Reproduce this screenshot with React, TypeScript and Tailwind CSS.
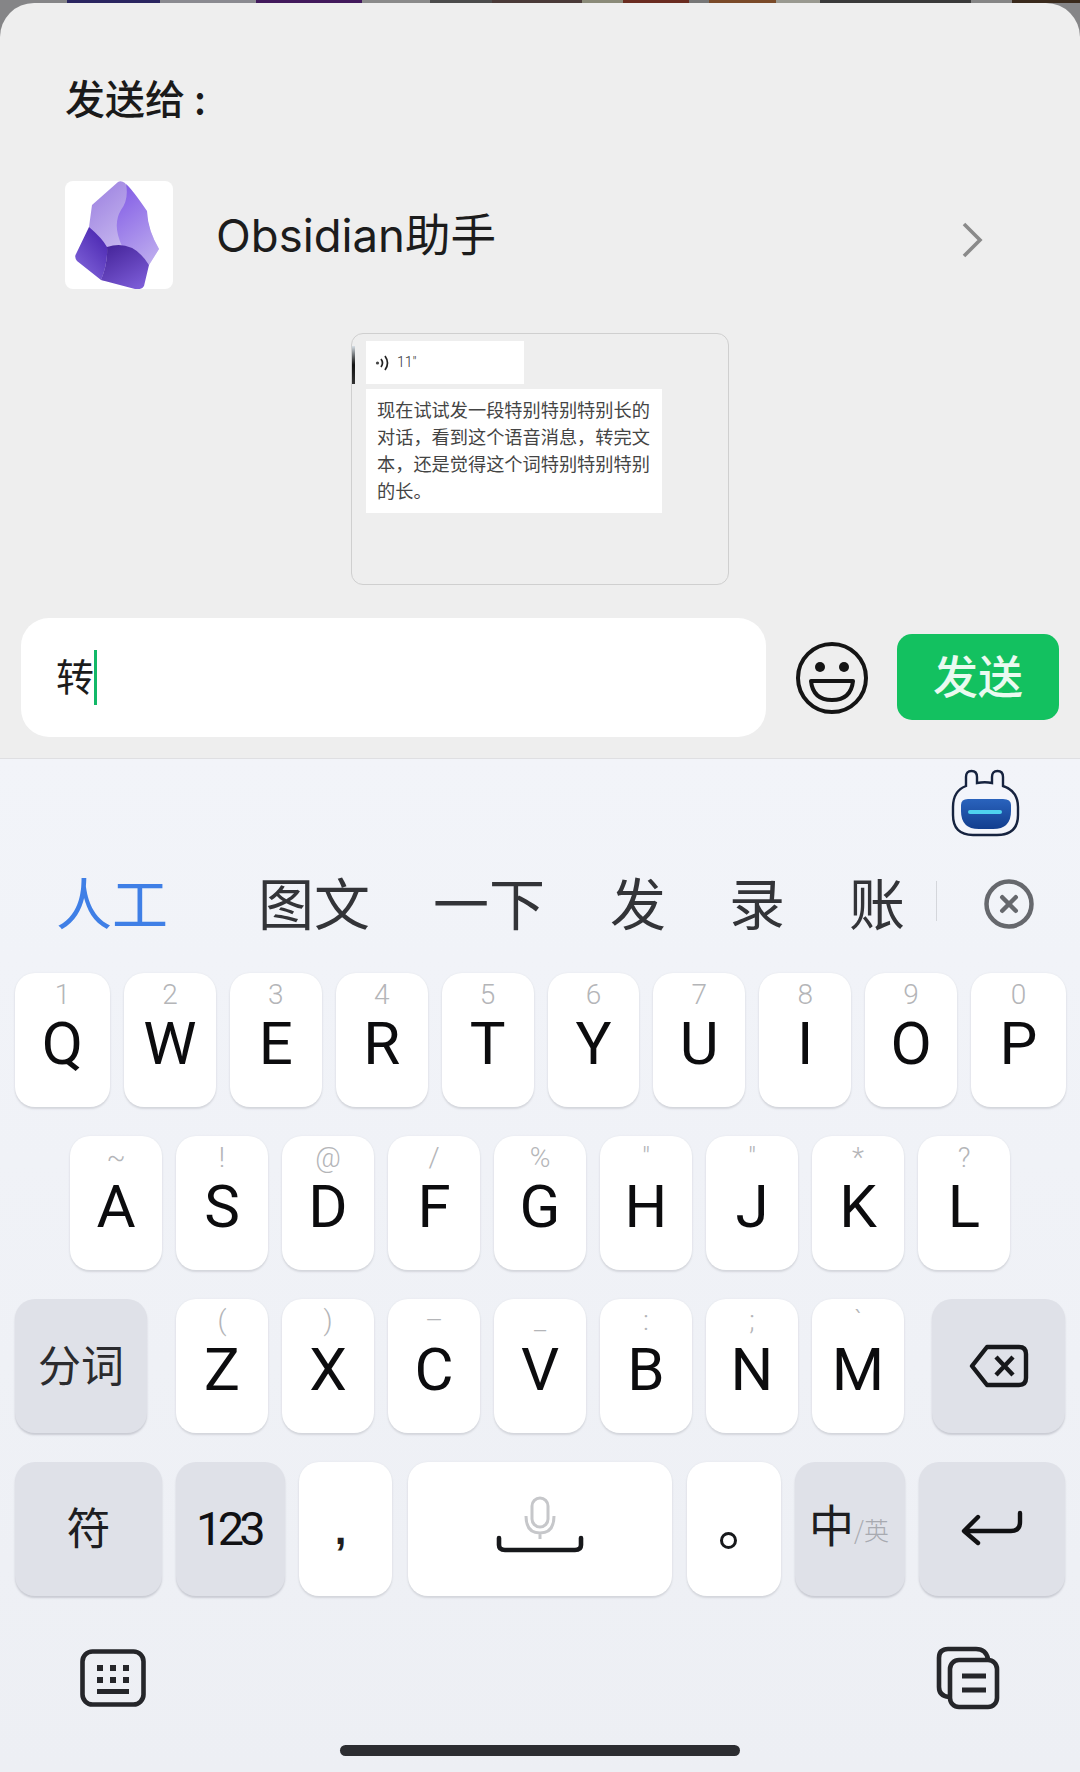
import { CircleX } from "lucide-react";

const row1 = [
  ["Q", "1"], ["W", "2"], ["E", "3"], ["R", "4"], ["T", "5"],
  ["Y", "6"], ["U", "7"], ["I", "8"], ["O", "9"], ["P", "0"],
];
const row2 = [
  ["A", "~"], ["S", "!"], ["D", "@"], ["F", "/"], ["G", "%"],
  ["H", '"'], ["J", '"'], ["K", "*"], ["L", "?"],
];
const row3 = [
  ["Z", "("], ["X", ")"], ["C", "–"], ["V", "_"], ["B", ":"], ["N", ";"], ["M", "`"],
];
const candidates = [
  { text: "人工", w: "w-[202px]", color: "text-[#3f7fe6]" },
  { text: "图文", w: "w-[175px]", color: "text-[#333438]" },
  { text: "一下", w: "w-[177px]", color: "text-[#333438]" },
  { text: "发", w: "w-[119px]", color: "text-[#333438]" },
  { text: "录", w: "w-[120px]", color: "text-[#333438]" },
  { text: "账", w: "w-[87px]", color: "text-[#333438]" },
];

const cjk = "font-['Noto_Sans_CJK_SC',sans-serif]";
const whiteKey = "bg-white rounded-[20px] shadow-[0_2px_2px_#d4d6dc,0_0_2px_#e2e4ea]";
const greyKey = "bg-[#dfe1e8] rounded-[20px] shadow-[0_2px_2px_#c9cbd3]";

function LetterKey({ letter, hint }: { letter: string; hint: string }) {
  return (
    <div className={`${whiteKey} h-[134px] flex flex-col items-center`}>
      <span className="h-[44px] pt-[4px] text-[28px] leading-[36px] text-[#b4b5b8] font-['Roboto',sans-serif] font-light">{hint}</span>
      <span className="text-[60px] leading-[54px] text-[#0c0c0e] font-['Roboto',sans-serif]">{letter}</span>
    </div>
  );
}

function ObsidianLogo() {
  return (
    <svg width="108" height="108" viewBox="0 0 108 108">
      <defs>
        <linearGradient id="ob1" x1="0.2" y1="0.1" x2="0.7" y2="0.9">
          <stop offset="0" stopColor="#a48be3" />
          <stop offset="1" stopColor="#d8cdf5" />
        </linearGradient>
        <linearGradient id="ob2" x1="0.3" y1="0" x2="0.7" y2="1">
          <stop offset="0" stopColor="#8560e6" />
          <stop offset="1" stopColor="#bcaaee" />
        </linearGradient>
        <linearGradient id="ob3" x1="0.2" y1="0" x2="0.8" y2="1">
          <stop offset="0" stopColor="#47269c" />
          <stop offset="1" stopColor="#7d5dd8" />
        </linearGradient>
        <linearGradient id="ob4" x1="0.7" y1="0.1" x2="0.1" y2="1">
          <stop offset="0" stopColor="#4f2cb4" />
          <stop offset="1" stopColor="#8468dc" />
        </linearGradient>
      </defs>
      <path d="M53 1 Q56 -1 60 2 L82 36 Q84 50 94 68 L84 84 L40 100 L36 99 L24 46 L27 24Z" fill="url(#ob1)" />
      <path d="M61 3 Q67 8 82 30 Q83 50 94 68 L84 84 Q76 70 57 65 Q47 44 56 29 Q64 18 61 3Z" fill="url(#ob2)" />
      <path d="M24 46 Q37 57 42 66 Q43 82 36 99 L12 80 Q9 76 11 73Z" fill="url(#ob4)" />
      <path d="M42 66 Q68 58 84 84 L79 105 Q77 109 70 108 L36 99 Q43 82 42 66Z" fill="url(#ob3)" />
    </svg>
  );
}

function Robot() {
  return (
    <svg width="70" height="68" viewBox="0 0 70 68">
      <defs>
        <linearGradient id="visor" x1="0" y1="0" x2="0" y2="1">
          <stop offset="0" stopColor="#2a63bd" />
          <stop offset="1" stopColor="#123e8e" />
        </linearGradient>
      </defs>
      <path d="M15 17 V8 Q15 2 20.5 2 Q26 2 26 8 V14 Q34 12.5 41 14 V8 Q41 2 46.5 2 Q52 2 52 8 V17 Q67 22 67 38 V46 Q67 66 46 66 H22 Q2 66 2 46 V38 Q2 22 15 17Z" fill="#f3f5fb" stroke="#16233f" strokeWidth="2.4" />
      <path d="M10 36 Q10 30 17 30 H52 Q60 30 60 36 V42 Q60 60 42 60 H28 Q10 60 10 42Z" fill="url(#visor)" />
      <rect x="17" y="41" width="34" height="4" rx="2" fill="#4fd2ee" />
    </svg>
  );
}

export default function App() {
  return (
    <div className="relative w-[1080px] h-[1772px] bg-[#858587] overflow-hidden flex flex-col font-['Inter',sans-serif]">
      {/* bit of the chat behind the sheet */}
      <div className="h-[3px] flex">
        <div className="w-[67px] bg-[#858587]" />
        <div className="w-[93px] bg-[#2a2560]" />
        <div className="w-[96px] bg-[#8a8a90]" />
        <div className="w-[106px] bg-[#42195c]" />
        <div className="w-[68px] bg-[#8a8a8a]" />
        <div className="w-[62px] bg-[#4c4c4c]" />
        <div className="w-[90px] bg-[#4a3a38]" />
        <div className="w-[41px] bg-[#8a8a78]" />
        <div className="w-[66px] bg-[#6a2c20]" />
        <div className="w-[20px] bg-[#777777]" />
        <div className="w-[67px] bg-[#7a4a28]" />
        <div className="w-[44px] bg-[#999990]" />
        <div className="w-[151px] bg-[#3a3a3a]" />
        <div className="w-[41px] bg-[#858585]" />
        <div className="flex-1 bg-[#3a2a1c]" />
      </div>

      <section className="h-[755px] bg-[#eeeeee] rounded-t-[34px] flex flex-col">
        <h1 className={`${cjk} ml-[65px] mt-[70px] h-[48px] text-[40px] leading-[48px] font-medium text-[#1a1a1a]`}>发送给 :</h1>

        <div className="mt-[60px] ml-[65px] h-[108px] flex items-center">
          <div className="w-[108px] h-[108px] bg-white rounded-[8px] overflow-hidden">
            <ObsidianLogo />
          </div>
          <div className="ml-[43px] mt-[2px] text-[45.5px] leading-[56px] text-[#1c1c1c] font-['Inter','Noto_Sans_CJK_SC',sans-serif]">Obsidian助手</div>
          <svg className="ml-auto mr-[96px] mt-[10px]" width="24" height="38" viewBox="0 0 24 38">
            <path d="M4 3 L20 19 L4 35" fill="none" stroke="#8a8a8a" strokeWidth="3.6" />
          </svg>
        </div>

        {/* quoted image */}
        <div className="relative mt-[44px] ml-[351px] w-[378px] h-[252px] border border-[#cfcfcf] rounded-[12px] pt-[7px] pl-[14px] flex flex-col gap-[5px]">
          <span className="absolute left-0 top-[12px] w-[3px] h-[38px] bg-gradient-to-b from-[#d8e0e6] via-[#111111] to-[#333333]" />
          <div className="w-[158px] h-[43px] bg-white flex items-center pl-[9px] gap-[6px]">
            <svg width="16" height="18" viewBox="0 0 16 18">
              <circle cx="2.5" cy="9" r="1.6" fill="#444" />
              <path d="M6 5 Q9 9 6 13 M10 2 Q15 9 10 16" fill="none" stroke="#222" strokeWidth="1.7" />
            </svg>
            <span className="text-[14px] text-[#333] font-['Roboto',sans-serif] font-light">11"</span>
          </div>
          <p className={`${cjk} w-[296px] h-[124px] bg-white px-[11px] pt-[7px] text-[18.2px] leading-[27px] text-[#444444]`}>
            现在试试发一段特别特别特别长的对话，看到这个语音消息，转完文本，还是觉得这个词特别特别特别的长。
          </p>
        </div>

        <div className="mt-[33px] flex items-center">
          <div className="ml-[21px] w-[745px] h-[119px] bg-white rounded-[28px] flex items-center pl-[35px]">
            <span className={`${cjk} text-[38px] leading-[50px] text-[#1c1c1c] pb-[6px]`}>转</span>
            <span className="w-[3px] h-[55px] bg-[#12b868]" />
          </div>
          <svg className="ml-[29px]" width="74" height="74" viewBox="0 0 74 74">
            <circle cx="37" cy="37" r="34" fill="none" stroke="#141414" strokeWidth="4" />
            <circle cx="25" cy="26" r="5" fill="#141414" />
            <circle cx="49" cy="26" r="5" fill="#141414" />
            <path d="M16 40 H58 Q56 59 37 59 Q18 59 16 40Z" fill="none" stroke="#141414" strokeWidth="4" strokeLinejoin="round" />
          </svg>
          <button className={`${cjk} ml-[28px] mb-[2px] w-[162px] h-[86px] pb-[4px] bg-[#13c160] rounded-[15px] text-[45px] font-medium text-[#eafaf0]`}>发送</button>
        </div>
      </section>

      <section className="flex-1 border-t border-[#dfdfe2] bg-gradient-to-b from-[#f2f4f9] to-[#edeff4] flex flex-col">
        <div className="h-[86px] pb-[8px] flex justify-end items-end pr-[59px]">
          <Robot />
        </div>

        <div className="mt-[28px] h-[56px] flex items-center pl-[56px]">
          {candidates.map((c) => (
            <span key={c.text} className={`${cjk} ${c.w} ${c.color} text-[56px] leading-[56px]`}>{c.text}</span>
          ))}
          <span className="w-px h-[40px] bg-[#d4d6db]" />
          <CircleX className="ml-[45px] mt-[6px] w-[54px] h-[54px] text-[#66686d]" strokeWidth={2} />
        </div>

        <div className="mt-[44px] pl-[15px] pr-[14px] grid grid-cols-[95px_repeat(8,minmax(0,1fr))_95px] gap-x-[14px]">
          {row1.map(([l, h]) => <LetterKey key={l} letter={l} hint={h} />)}
        </div>

        <div className="mt-[29px] pl-[70px] pr-[70px] grid grid-cols-9 gap-x-[14px]">
          {row2.map(([l, h]) => <LetterKey key={l} letter={l} hint={h} />)}
        </div>

        <div className="mt-[29px] px-[15px] flex gap-x-[14px]">
          <div className={`${greyKey} w-[132px] h-[134px] pb-[6px] flex items-center justify-center ${cjk} text-[43px] text-[#2b2b2e]`}>分词</div>
          <div className="flex-1 grid grid-cols-7 gap-x-[14px] ml-[15px] mr-[14px]">
            {row3.map(([l, h]) => <LetterKey key={l} letter={l} hint={h} />)}
          </div>
          <div className={`${greyKey} w-[133px] h-[134px] flex items-center justify-center`}>
            <svg width="60" height="44" viewBox="0 0 60 44">
              <path d="M18 3 H50 Q57 3 57 10 V34 Q57 41 50 41 H18 L3 22Z" fill="none" stroke="#17181b" strokeWidth="4.4" strokeLinejoin="round" />
              <path d="M27 13 L44 31 M44 13 L27 31" stroke="#17181b" strokeWidth="4.4" />
            </svg>
          </div>
        </div>

        <div className="mt-[29px] px-[15px] flex gap-x-[14px]">
          <div className={`${greyKey} w-[147px] h-[134px] pb-[6px] flex items-center justify-center ${cjk} text-[44px] text-[#1e1e21]`}>符</div>
          <div className={`${greyKey} w-[109px] h-[134px] pr-[4px] flex items-center justify-center text-[47px] tracking-[-0.1em] text-[#111114] font-['Roboto',sans-serif]`}>123</div>
          <div className={`${whiteKey} w-[93px] h-[134px] pr-[10px] flex items-center justify-center`}>
            <span className="text-[42px] font-bold text-[#1e1e21] font-['Liberation_Sans',sans-serif]">,</span>
          </div>
          <div className={`${whiteKey} w-[264px] h-[134px] ml-[2px] flex flex-col items-center pt-[34px]`}>
            <svg width="88" height="62" viewBox="0 0 88 62">
              <rect x="36" y="2" width="16" height="29" rx="8" fill="none" stroke="#c6c7ca" strokeWidth="3" />
              <path d="M30 20 Q30 37 44 37 Q58 37 58 20 M44 37 V43" fill="none" stroke="#c6c7ca" strokeWidth="3" />
              <path d="M3 42 V49 Q3 54 9 54 H79 Q85 54 85 49 V42" fill="none" stroke="#17181b" strokeWidth="4.6" strokeLinecap="round" />
            </svg>
          </div>
          <div className={`${whiteKey} w-[94px] h-[134px] ml-px flex justify-center pr-[12px] pt-[70px]`}>
            <span className="w-[17px] h-[17px] rounded-full border-[3px] border-[#17181b]" />
          </div>
          <div className={`${greyKey} w-[110px] h-[134px] pl-[2px] pr-[4px] pb-[10px] flex items-center justify-center`}>
            <span className={`${cjk} text-[45px] leading-[50px] text-[#1e1e21]`}>中</span>
            <span className={`${cjk} text-[25px] leading-[50px] mt-[10px] text-[#a8aab0] font-light`}>/英</span>
          </div>
          <div className={`${greyKey} flex-1 h-[134px] flex items-center justify-center`}>
            <svg width="62" height="38" viewBox="0 0 62 38">
              <path d="M59 3 V12 Q59 21 50 21 H4 M17 7 L3 21 L17 33" fill="none" stroke="#111113" strokeWidth="4.4" strokeLinecap="round" strokeLinejoin="round" />
            </svg>
          </div>
        </div>

        <div className="mt-[50px] flex items-center justify-between pl-[80px] pr-[80px]">
          <svg width="66" height="58" viewBox="0 0 66 58">
            <rect x="2.5" y="2.5" width="61" height="53" rx="10" fill="none" stroke="#25262a" strokeWidth="4.6" />
            <path d="M17 16 h6 v6 h-6z M30 16 h6 v6 h-6z M43 16 h6 v6 h-6z M17 28 h6 v6 h-6z M30 28 h6 v6 h-6z M43 28 h6 v6 h-6z" fill="#25262a" />
            <rect x="17" y="40" width="32" height="5" fill="#25262a" />
          </svg>
          <svg width="64" height="64" viewBox="0 0 64 64">
            <path d="M13 51 Q3 50 3 41 V12 Q3 3 12 3 H40 Q50 3 52 13" fill="none" stroke="#25262a" strokeWidth="4.6" />
            <rect x="14" y="14" width="47" height="47" rx="9" fill="none" stroke="#25262a" strokeWidth="4.6" />
            <path d="M26 30 H50 M26 44 H50" stroke="#25262a" strokeWidth="5" />
          </svg>
        </div>

        <div className="mt-[35px] mx-auto w-[400px] h-[11px] rounded-full bg-[#2c2d31]" />
      </section>
    </div>
  );
}
